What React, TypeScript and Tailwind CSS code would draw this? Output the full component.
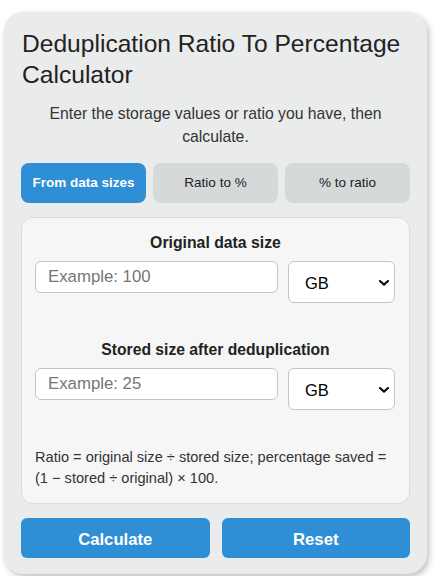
import React from "react";

function Chevron() {
  return (
    <svg width="10" height="6" viewBox="0 0 10 6" className="absolute right-[5px] top-[18px] pointer-events-none">
      <path d="M1 1 L5 4.6 L9 1" fill="none" stroke="#111" strokeWidth="2.2" strokeLinecap="round" strokeLinejoin="round" />
    </svg>
  );
}

function Row({ placeholder }: { placeholder: string }) {
  return (
    <div className="flex items-start gap-[10px]">
      <input
        placeholder={placeholder}
        className="w-[243px] h-[32px] rounded-[6px] border border-[#c4c4c4] bg-white px-[12px] pb-[1px] text-[16.8px] text-[#222] placeholder:text-[#767676] outline-none"
      />
      <div className="relative w-[107px] h-[42px] rounded-[6px] border border-[#c4c4c4] bg-white flex items-center pl-[16px] pt-[2px] text-[16.5px] text-black">
        GB
        <Chevron />
      </div>
    </div>
  );
}

export default function App() {
  return (
    <div className="w-[447px] h-[576px] bg-white overflow-hidden" style={{ fontFamily: '"Liberation Sans", Arial, sans-serif' }}>
      <div className="ml-[4px] mt-[12px] w-[423px] h-[562px] rounded-[20px] bg-[#eaebeb] shadow-[2px_3px_6px_rgba(0,0,0,0.25)] px-[17px] pt-[16px]">
        <h1 className="text-[24.6px] leading-[31px] text-[#222] pl-[1px]">Deduplication Ratio To Percentage Calculator</h1>
        <p className="mt-[12px] text-[15.75px] leading-[23px] text-[#333] text-center px-[8px]">
          Enter the storage values or ratio you have, then calculate.
        </p>
        <div className="mt-[15px] grid grid-cols-3 gap-[7px]">
          <div className="h-[40px] rounded-[8px] bg-[#2e8fd6] text-white font-bold text-[13.5px] flex items-center justify-center">From data sizes</div>
          <div className="h-[40px] rounded-[8px] bg-[#d6d9da] text-[#222] text-[13.5px] flex items-center justify-center">Ratio to %</div>
          <div className="h-[40px] rounded-[8px] bg-[#d6d9da] text-[#222] text-[13.5px] flex items-center justify-center">% to ratio</div>
        </div>
        <div className="mt-[14px] h-[287px] rounded-[12px] border border-[#dcdcdc] bg-[#f6f6f6] px-[13px] pt-[16px]">
          <div className="text-center font-bold text-[15.8px] leading-[18px] text-[#222]">Original data size</div>
          <div className="mt-[9px]"><Row placeholder="Example: 100" /></div>
          <div className="mt-[38px] text-center font-bold text-[15.7px] leading-[18px] text-[#222]">Stored size after deduplication</div>
          <div className="mt-[9px]"><Row placeholder="Example: 25" /></div>
          <p className="mt-[37px] text-[14.6px] leading-[21px] text-[#333]">
            Ratio = original size ÷ stored size; percentage saved = (1 − stored ÷ original) × 100.
          </p>
        </div>
        <div className="mt-[14px] grid grid-cols-2 gap-[12px]">
          <button className="h-[40px] rounded-[6px] bg-[#2e8fd6] text-white font-bold text-[16.7px] pt-[3px]">Calculate</button>
          <button className="h-[40px] rounded-[6px] bg-[#2e8fd6] text-white font-bold text-[16.7px] pt-[3px]">Reset</button>
        </div>
      </div>
    </div>
  );
}
